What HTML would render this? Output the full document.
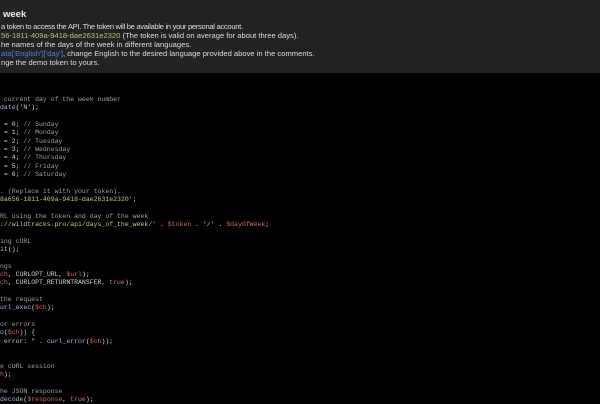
<!DOCTYPE html>
<html><head><meta charset="utf-8"><style>
html,body{margin:0;padding:0;width:600px;height:400px;overflow:hidden;background:#000;}
#top{position:absolute;left:0;top:0;width:600px;height:73px;background:#222;font-family:"Liberation Sans",sans-serif;color:#ddd;}
#top div{position:absolute;left:1px;font-size:7.6px;white-space:nowrap;}
#top h{position:absolute;left:3px;top:9px;font-size:9.5px;font-weight:bold;color:#eee;}
.l{position:absolute;left:0;font-family:"Liberation Mono",monospace;font-size:6.5px;line-height:8px;height:8px;color:#d8d8d8;white-space:pre;}
.c{color:#a0a0a0}.s{color:#c9c98a}.v{color:#d06464}.f{color:#a8b8e0}.k{color:#d07a70}
</style></head><body>
<div id="top">
<h>week</h>
<div style="top:22px;letter-spacing:-0.3px">a token to access the API. The token will be available in your personal account.</div>
<div style="top:31px"><span style="color:#b9c27a">56-1811-409a-9418-dae2631e2320</span> (The token is valid on average for about three days).</div>
<div style="top:40px">he names of the days of the week in different languages.</div>
<div style="top:49px"><span style="color:#4f7fd8">ata['English']['day']</span>, change English to the desired language provided above in the comments.</div>
<div style="top:58px">nge the demo token to yours.</div>
</div>
<div class="l" style="top:96px"><span class="c"> current day of the week number</span></div>
<div class="l" style="top:104.3px"><span class="f">date</span>(<span class="s">'N'</span>);</div>
<div class="l" style="top:121px"> = 0; <span class="c">// Sunday</span></div>
<div class="l" style="top:129.3px"> = 1; <span class="c">// Monday</span></div>
<div class="l" style="top:137.6px"> = 2; <span class="c">// Tuesday</span></div>
<div class="l" style="top:146px"> = 3; <span class="c">// Wednesday</span></div>
<div class="l" style="top:154.3px"> = 4; <span class="c">// Thursday</span></div>
<div class="l" style="top:162.6px"> = 5; <span class="c">// Friday</span></div>
<div class="l" style="top:171px"> = 6; <span class="c">// Saturday</span></div>
<div class="l" style="top:187.6px"><span class="c">. (Replace it with your token).</span></div>
<div class="l" style="top:196px"><span class="s">8a656-1811-409a-9418-dae2631e2320'</span>;</div>
<div class="l" style="top:212.6px"><span class="c">RL using the token and day of the week</span></div>
<div class="l" style="top:221px"><span class="s">://wildtracks.pro/api/days_of_the_week/'</span> . <span class="v">$token</span> . <span class="s">'/'</span> . <span class="v">$dayOfWeek</span>;</div>
<div class="l" style="top:237.6px"><span class="c">ing cURL</span></div>
<div class="l" style="top:246px"><span class="f">it</span>();</div>
<div class="l" style="top:262.6px"><span class="c">ngs</span></div>
<div class="l" style="top:271px"><span class="v">ch</span>, CURLOPT_URL, <span class="v">$url</span>);</div>
<div class="l" style="top:279.3px"><span class="v">ch</span>, CURLOPT_RETURNTRANSFER, <span class="k">true</span>);</div>
<div class="l" style="top:296px"><span class="c">the request</span></div>
<div class="l" style="top:304.3px"><span class="f">url_exec</span>(<span class="v">$ch</span>);</div>
<div class="l" style="top:321px"><span class="c">or errors</span></div>
<div class="l" style="top:329.3px"><span class="f">o</span>(<span class="v">$ch</span>)) {</div>
<div class="l" style="top:337.6px"><span class="s"> error: "</span> . <span class="f">curl_error</span>(<span class="v">$ch</span>));</div>
<div class="l" style="top:362.6px"><span class="c">e cURL session</span></div>
<div class="l" style="top:371px"><span class="v">h</span>);</div>
<div class="l" style="top:387.6px"><span class="c">he JSON response</span></div>
<div class="l" style="top:396px"><span class="f">decode</span>(<span class="v">$response</span>, <span class="k">true</span>);</div>
</body></html>
